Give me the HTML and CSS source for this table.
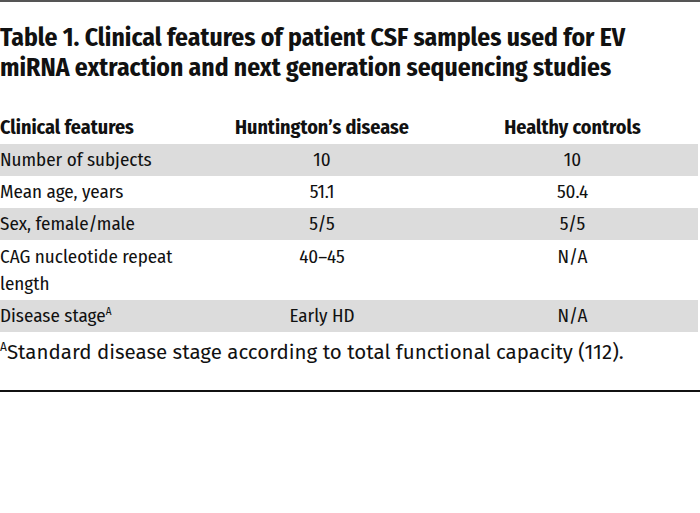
FILE: index.html
```html
<!DOCTYPE html>
<html lang="en">
<head>
<meta charset="utf-8">
<title>Table 1</title>
<link rel="stylesheet" href="styles.css">
</head>
<body>
<div class="figure">
  <h1 class="title">Table 1. Clinical features of patient CSF samples used for EV miRNA extraction and next generation sequencing studies</h1>
  <table class="data">
    <thead>
      <tr>
        <th class="c1">Clinical features</th>
        <th class="c2">Huntington’s disease</th>
        <th class="c3">Healthy controls</th>
      </tr>
    </thead>
    <tbody>
      <tr class="shade"><td class="c1">Number of subjects</td><td class="c2">10</td><td class="c3">10</td></tr>
      <tr><td class="c1">Mean age, years</td><td class="c2">51.1</td><td class="c3">50.4</td></tr>
      <tr class="shade"><td class="c1">Sex, female/male</td><td class="c2">5/5</td><td class="c3">5/5</td></tr>
      <tr class="tall"><td class="c1">CAG nucleotide repeat length</td><td class="c2">40–45</td><td class="c3">N/A</td></tr>
      <tr class="shade"><td class="c1">Disease stage<sup>A</sup></td><td class="c2">Early HD</td><td class="c3">N/A</td></tr>
    </tbody>
  </table>
  <p class="note"><sup>A</sup>Standard disease stage according to total functional capacity (112).</p>
</div>
</body>
</html>
```

FILE: styles.css
```css
html, body {
  margin: 0;
  padding: 0;
  background: #fff;
}
.figure {
  width: 700px;
  border-top: 2px solid #555;
  border-bottom: 2px solid #111;
  color: #111;
}
.title {
  margin: 0;
  padding: 21px 0 0 0;
  font-family: "Fira Sans Condensed", "Roboto Condensed", sans-serif;
  font-weight: 700;
  font-size: 25.5px;
  line-height: 30px;
  width: 680px;
}
.data {
  margin-top: 17px;
  width: 698px;
  border-collapse: collapse;
  font-family: "Fira Sans Condensed", "Roboto Condensed", sans-serif;
  font-size: 19px;
}
.data th {
  font-weight: 700;
  font-size: 20px;
  line-height: 32px;
  padding: 11px 0 1px 0;
  vertical-align: top;
}
.data td {
  height: 32px;
  padding: 0;
  line-height: 32px;
  vertical-align: top;
}
.data .c1 { width: 197px; text-align: left; }
.data .c2 { width: 250px; text-align: center; }
.data .c3 { width: 251px; text-align: center; }
.data tr.shade td { background: #dcdcdc; }
.data tr.tall td {
  height: 60px;
  line-height: 27px;
  padding-top: 3px;
  box-sizing: border-box;
}
.data sup {
  font-size: 11px;
  line-height: 0;
  vertical-align: 7px;
}
.note {
  margin: 0;
  padding: 8px 0 26px 0;
  font-family: "Fira Sans", "Open Sans", sans-serif;
  font-size: 20.5px;
  line-height: 24px;
}
.note sup {
  font-size: 12px;
  line-height: 0;
  vertical-align: 8px;
}
```
